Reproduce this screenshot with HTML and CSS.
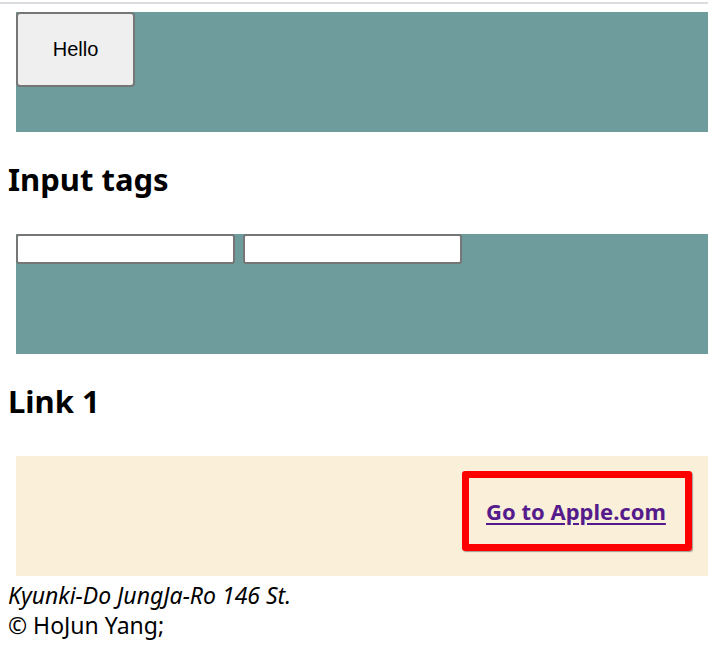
FILE: index.html
```html
<!DOCTYPE html>
<html lang="en">
<head>
<meta charset="utf-8">
<title>Page</title>
<link rel="stylesheet" href="styles.css">
</head>
<body>
<div class="rule"></div>
<section class="box teal">
  <button class="btn" type="button">Hello</button>
</section>
<h2 class="title">Input tags</h2>
<section class="box teal inputs">
  <input class="field" type="text">
  <input class="field" type="text">
</section>
<h2 class="title">Link 1</h2>
<section class="box cream">
  <div class="linkbox"><a class="link" href="#">Go to Apple.com</a></div>
</section>
<footer class="foot">
  <address class="addr">Kyunki-Do JungJa-Ro 146 St.</address>
  <p class="copy">© HoJun Yang;</p>
</footer>
</body>
</html>
```
FILE: styles.css
```css
html { overflow: hidden; }
body {
  margin: 0;
  padding: 0 0 0 8px;
  font-family: "Noto Sans", sans-serif;
  color: #000;
  background: #fff;
}
.rule {
  margin-top: 2px;
  height: 2px;
  background: #dcdce0;
  margin-left: -8px;
  width: 708px;
}
.box {
  margin-left: 8px;
  width: 692px;
  height: 120px;
  box-sizing: border-box;
}
.teal { background: #6e9c9d; margin-top: 8px; }
.btn {
  display: block;
  width: 119px;
  height: 75px;
  margin: 0;
  background: #efefef;
  border: 2px solid #767676;
  border-radius: 4px;
  font-family: "Liberation Sans", Arial, sans-serif;
  font-size: 20px;
  color: #000;
}
.title {
  margin: 0;
  font-family: "Noto Sans", sans-serif;
  font-weight: bold;
  font-size: 31px;
  line-height: 44px;
  padding-top: 25px;
  height: 102px;
  box-sizing: border-box;
}
.title + .teal { margin-top: 0; }
.inputs {
  display: flex;
  align-items: flex-start;
  gap: 8px;
}
.field {
  margin: 0;
  width: 219px;
  height: 30px;
  box-sizing: border-box;
  border: 2px solid #767676;
  border-radius: 3px;
  background: #fff;
}
.cream {
  background: #faefd9;
  display: flex;
  justify-content: flex-end;
  align-items: flex-start;
  padding: 15px 16px 0 0;
}
.linkbox {
  width: 230px;
  height: 80px;
  box-sizing: border-box;
  border: 7px solid #ff0000;
  border-radius: 3px;
  box-shadow: 1px 1px 1px rgba(0,0,0,0.35);
  padding: 0 0 0 17px;
  display: flex;
  align-items: center;
}
.link {
  color: #551a8b;
  font-weight: bold;
  font-size: 22px;
  text-decoration: underline;
  text-underline-offset: 3px;
}
.foot { padding-top: 4px; }
.addr {
  font-style: italic;
  font-size: 23px;
  line-height: 30px;
}
.copy {
  margin: 0;
  font-size: 23px;
  line-height: 30px;
}
```
